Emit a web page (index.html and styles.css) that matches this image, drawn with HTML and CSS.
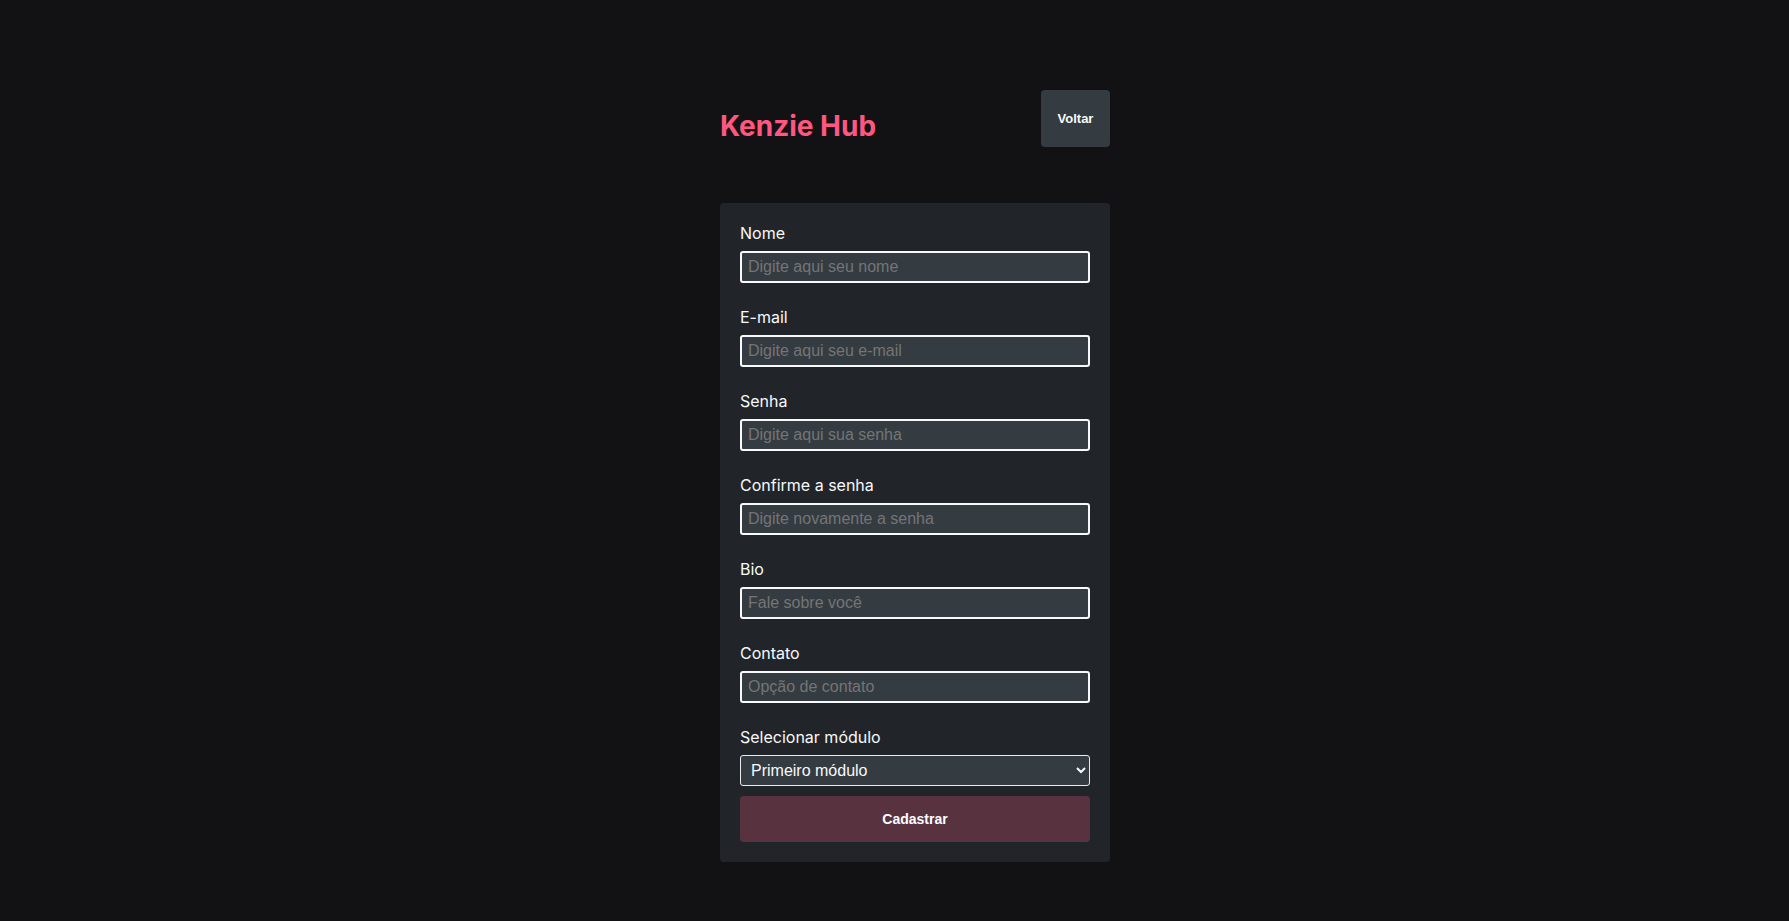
FILE: index.html
```html
<!DOCTYPE html>
<html lang="pt-BR">
<head>
<meta charset="utf-8">
<title>Kenzie Hub - Cadastro</title>
<link rel="stylesheet" href="styles.css">
</head>
<body>
<main class="page">
  <header class="header">
    <h1 class="logo">Kenzie Hub</h1>
    <button class="btn-back" type="button">Voltar</button>
  </header>
  <section class="card">
    <form class="form">
      <div class="field">
        <label class="label" for="nome">Nome</label>
        <input class="input" id="nome" type="text" placeholder="Digite aqui seu nome">
      </div>
      <div class="field">
        <label class="label" for="email">E-mail</label>
        <input class="input" id="email" type="email" placeholder="Digite aqui seu e-mail">
      </div>
      <div class="field">
        <label class="label" for="senha">Senha</label>
        <input class="input" id="senha" type="password" placeholder="Digite aqui sua senha">
      </div>
      <div class="field">
        <label class="label" for="confirma">Confirme a senha</label>
        <input class="input" id="confirma" type="password" placeholder="Digite novamente a senha">
      </div>
      <div class="field">
        <label class="label" for="bio">Bio</label>
        <input class="input" id="bio" type="text" placeholder="Fale sobre você">
      </div>
      <div class="field">
        <label class="label" for="contato">Contato</label>
        <input class="input" id="contato" type="text" placeholder="Opção de contato">
      </div>
      <div class="field field-last">
        <label class="label" for="modulo">Selecionar módulo</label>
        <select class="select" id="modulo">
          <option>Primeiro módulo</option>
          <option>Segundo módulo</option>
          <option>Terceiro módulo</option>
          <option>Quarto módulo</option>
        </select>
      </div>
      <button class="btn-submit" type="submit">Cadastrar</button>
    </form>
  </section>
</main>
</body>
</html>
```

FILE: styles.css
```css
* {
  box-sizing: border-box;
}

html, body {
  margin: 0;
  padding: 0;
  background: #121214;
  min-height: 100%;
}

body {
  font-family: Inter, "Liberation Sans", Arial, sans-serif;
  color: #f8f9fa;
}

.page {
  display: flex;
  flex-direction: column;
  align-items: center;
  padding: 90px 0 0 41px;
}

.header {
  width: 390px;
  height: 57px;
  display: flex;
  justify-content: space-between;
  align-items: center;
}

.logo {
  margin: 14px 0 0 0;
  font-family: Inter, "Liberation Sans", sans-serif;
  font-weight: 700;
  font-size: 28px;
  line-height: 34px;
  color: #ff577f;
}

.btn-back {
  width: 69px;
  height: 57px;
  border: none;
  border-radius: 4px;
  background: #343b41;
  color: #f8f9fa;
  font-family: "Liberation Sans", Arial, sans-serif;
  font-weight: 700;
  font-size: 13px;
  cursor: pointer;
  padding: 0;
}

.card {
  width: 390px;
  margin-top: 56px;
  background: #212529;
  border-radius: 4px;
  padding: 20px;
}

.form {
  display: flex;
  flex-direction: column;
}

.field {
  display: flex;
  flex-direction: column;
  gap: 8px;
  margin-bottom: 24px;
}

.field-last {
  margin-bottom: 10px;
}

.label {
  font-family: Inter, sans-serif;
  font-size: 16px;
  line-height: normal;
  color: #f8f9fa;
}

.input {
  width: 350px;
  height: 32px;
  border: 2px solid #f8f9fa;
  border-radius: 3px;
  background: #343b41;
  color: #f8f9fa;
  font-family: "Liberation Sans", Arial, sans-serif;
  font-size: 16px;
  padding: 0 6px;
  outline: none;
}

.input::placeholder {
  color: #757575;
}

.select {
  width: 350px;
  height: 31px;
  border: 1px solid #e9ecef;
  border-radius: 3px;
  background: #343b41;
  color: #f8f9fa;
  font-family: "Liberation Sans", Arial, sans-serif;
  font-size: 16px;
  padding: 0 6px;
  outline: none;
}

.btn-submit {
  width: 350px;
  height: 46px;
  border: none;
  border-radius: 4px;
  background: #59323f;
  color: #ffffff;
  font-family: "Liberation Sans", Arial, sans-serif;
  font-weight: 700;
  font-size: 14px;
  cursor: pointer;
}
```
